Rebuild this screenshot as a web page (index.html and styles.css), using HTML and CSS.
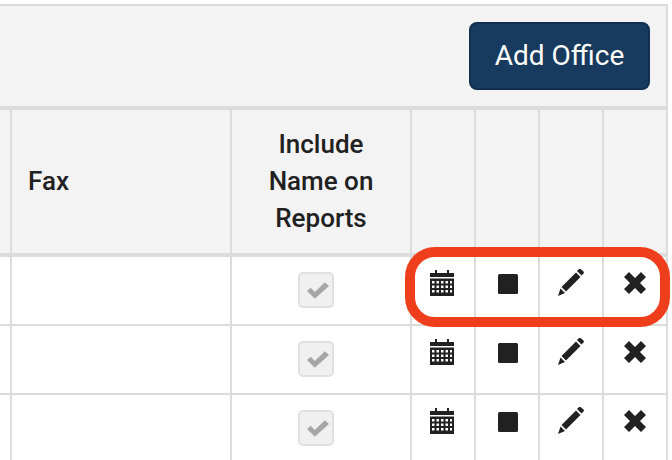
FILE: index.html
```html
<!DOCTYPE html>
<html lang="en">
<head>
  <meta charset="UTF-8" />
  <title>Offices</title>
  <link rel="stylesheet" href="styles.css">
</head>
<body>
  <svg class="defs" width="0" height="0">
    <symbol id="i-calendar" viewBox="0 0 24 26">
      <path d="M0 3h5V0h2v3h10V0h2v3h5v4H0z"/>
      <path fill-rule="evenodd" d="M0 8.500h24V26H0zM2 11v2.500h2.500V11zM6.500 11v2.500H9V11zM11 11v2.500h2.500V11zM15.500 11v2.500H18V11zM20 11v2.500h2V11zM2 15.500V18h2.500v-2.500zM6.500 15.500V18H9v-2.500zM11 15.500V18h2.500v-2.500zM15.500 15.500V18H18v-2.500zM20 15.500V18h2v-2.500zM2 20v2.500h2.500V20zM6.500 20v2.500H9V20zM11 20v2.500h2.500V20zM15.500 20v2.500H18V20zM20 20v2.500h2V20z"/>
    </symbol>
    <symbol id="i-stop" viewBox="0 0 20 20">
      <rect width="20" height="20" rx="1.500"/>
    </symbol>
    <symbol id="i-pencil" viewBox="0 0 26 27">
      <path d="M21 0l1-.500 4 3.500-.5 1.500-2 2-4.500-4.500z"/>
      <path d="M18 3.500l4.500 4.500L8 22.500 3.500 18z"/>
      <path d="M2.500 19.500l4.500 4.500L0 27z"/>
    </symbol>
    <symbol id="i-remove" viewBox="0 0 22 22">
      <path d="M5 0l6 6 6-6 5 5-6 6 6 6-5 5-6-6-6 6-5-5 6-6-6-6z"/>
    </symbol>
    <symbol id="i-ok" viewBox="0 0 24 18">
      <path d="M0 9.500L4 6l4.500 4.500L19.500 0 24 4 8.500 18z"/>
    </symbol>
  </svg>

  <div class="office-panel">
    <div class="panel-top">
      <button class="add-btn">Add Office</button>
    </div>
    <table class="office-table">
      <colgroup>
        <col class="col-prev">
        <col class="col-fax">
        <col class="col-inc">
        <col class="col-act">
        <col class="col-act">
        <col class="col-act">
        <col class="col-act">
      </colgroup>
      <thead>
        <tr>
          <th></th>
          <th class="left">Fax</th>
          <th>Include Name on Reports</th>
          <th></th>
          <th></th>
          <th></th>
          <th></th>
        </tr>
      </thead>
      <tbody>
        <tr>
          <td></td>
          <td></td>
          <td><span class="check"><svg class="ok"><use href="#i-ok"/></svg></span></td>
          <td><svg class="ic cal"><use href="#i-calendar"/></svg></td>
          <td><svg class="ic stop"><use href="#i-stop"/></svg></td>
          <td><svg class="ic pen"><use href="#i-pencil"/></svg></td>
          <td><svg class="ic rem"><use href="#i-remove"/></svg></td>
        </tr>
        <tr>
          <td></td>
          <td></td>
          <td><span class="check"><svg class="ok"><use href="#i-ok"/></svg></span></td>
          <td><svg class="ic cal"><use href="#i-calendar"/></svg></td>
          <td><svg class="ic stop"><use href="#i-stop"/></svg></td>
          <td><svg class="ic pen"><use href="#i-pencil"/></svg></td>
          <td><svg class="ic rem"><use href="#i-remove"/></svg></td>
        </tr>
        <tr>
          <td></td>
          <td></td>
          <td><span class="check"><svg class="ok"><use href="#i-ok"/></svg></span></td>
          <td><svg class="ic cal"><use href="#i-calendar"/></svg></td>
          <td><svg class="ic stop"><use href="#i-stop"/></svg></td>
          <td><svg class="ic pen"><use href="#i-pencil"/></svg></td>
          <td><svg class="ic rem"><use href="#i-remove"/></svg></td>
        </tr>
      </tbody>
    </table>
    <div class="highlight"></div>
  </div>
</body>
</html>
```

FILE: styles.css
```css
html, body {
  margin: 0;
  height: 460px;
  overflow: hidden;
  background-color: #fff;
}
body {
  padding-top: 4px;
  box-sizing: border-box;
  font-family: Roboto, 'Liberation Sans', sans-serif;
  color: #212121;
}
.defs {
  position: absolute;
}
.office-panel {
  position: relative;
  width: 668px;
  box-sizing: border-box;
  border-top: 2px solid #dcdcdc;
  border-right: 2px solid #dcdcdc;
}
.panel-top {
  background-color: #f3f3f3;
  padding: 16px;
  border-bottom: 4px solid #dcdcdc;
  display: flex;
  justify-content: flex-end;
}
.add-btn {
  width: 181px;
  height: 68px;
  box-sizing: border-box;
  background-color: #173a5e;
  color: #fff;
  border: 2px solid #11304f;
  border-radius: 8px;
  font-family: Roboto, sans-serif;
  font-size: 28px;
  padding: 0 0 2px;
}
.office-table {
  table-layout: fixed;
  width: 666px;
  border-spacing: 0;
}
.col-prev { width: 10px; }
.col-fax { width: 220px; }
.col-inc { width: 180px; }
.col-act { width: 64px; }
.office-table th {
  background-color: #f3f3f3;
  border-bottom: 4px solid #dcdcdc;
  border-left: 2px solid #dcdcdc;
  padding: 16px;
  font-size: 26px;
  font-weight: 500;
  line-height: 37px;
  text-align: center;
  height: 111px;
}
.office-table th:first-child,
.office-table td:first-child {
  border-left: none;
  padding: 0;
}
.office-table th.left {
  text-align: left;
}
.office-table td {
  height: 67px;
  border-bottom: 2px solid #dcdcdc;
  border-left: 2px solid #dcdcdc;
  padding: 0;
  text-align: center;
  vertical-align: top;
}
.ic {
  display: block;
  margin: 0 auto;
  fill: #212121;
}
.cal { width: 24px; height: 26px; margin: 13px 0 0 18px; }
.stop { width: 20px; height: 20px; margin: 17px 0 0 22px; }
.pen { width: 26px; height: 27px; margin-top: 12px; }
.rem { width: 22px; height: 22px; margin-top: 15px; }
.check {
  display: flex;
  align-items: center;
  justify-content: center;
  width: 36px;
  height: 36px;
  box-sizing: border-box;
  margin: 15px 0 0 66px;
  background-color: #f0f0f0;
  border: 2px solid #e0e0e0;
  border-radius: 5px;
}
.ok {
  width: 22px;
  height: 17px;
  margin-left: 3px;
  fill: #a6a6a6;
}
.highlight {
  position: absolute;
  left: 405px;
  top: 241px;
  width: 265px;
  height: 80px;
  box-sizing: border-box;
  border: 10px solid #ef3e1b;
  border-radius: 30px;
}
```
